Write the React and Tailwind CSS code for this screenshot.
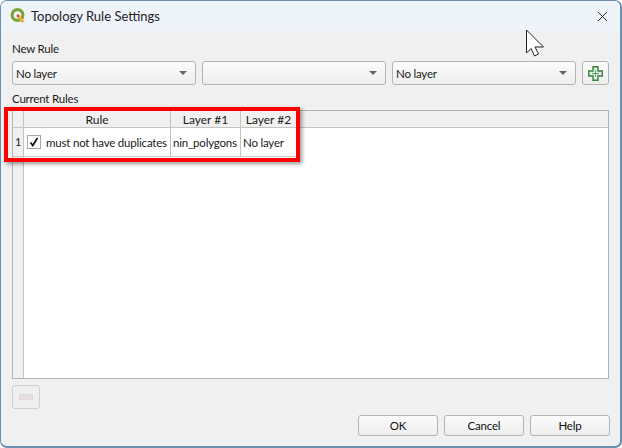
import React from "react";
import { X } from "lucide-react";

const Combo = ({ label }) => (
  <div className="w-[184px] h-[24px] flex items-center justify-between pl-[3px] pr-[8px] rounded-[3px] border border-[#b4b4b4] bg-gradient-to-b from-[#fcfcfc] to-[#eeeeee] text-[#1a1a1a]">
    <span className="pt-px">{label}</span>
    <span className="w-0 h-0 border-x-[4px] border-x-transparent border-t-[4px] border-t-[#666666]" />
  </div>
);

const QgisLogo = () => (
  <svg width="18" height="18" viewBox="0 0 18 18" fill="none">
    <circle cx="8.500" cy="8" r="5.400" stroke="#7aa53a" strokeWidth="3.200" />
    <path d="M9 9l5.500 6" stroke="#e8b23a" strokeWidth="2.800" />
    <circle cx="9" cy="8.800" r="1.500" fill="#d9533a" />
  </svg>
);

const PlusIcon = () => (
  <svg width="15" height="15" viewBox="0 0 15 15">
    <path
      d="M5 .7h5v4.300h4.300v5H10v4.300H5V10H.7V5H5z"
      fill="#dcecdc"
      stroke="#3f7f42"
      strokeWidth="1.400"
    />
    <path d="M7.500 2.500v10M2.500 7.500h10" stroke="#ffffff" strokeWidth="1" />
    <path d="M7.500 4v7M4 7.500h7" stroke="#6a9f6c" strokeWidth="1" />
  </svg>
);

const Button = ({ children }) => (
  <button className="w-[80px] h-[21px] rounded-[3px] border border-[#b4b4b4] bg-gradient-to-b from-[#fbfbfb] to-[#eeeeee] text-[#111111]">
    {children}
  </button>
);

const App = () => {
  return (
    <div
      className="relative w-[622px] h-[448px] overflow-hidden bg-[#f0f0f0] text-[11.5px] tracking-[-0.2px] leading-[16px] text-[#1a1a1a] rounded-[7px] border border-[#6b8fb0] border-r-2 border-b-2"
      style={{ fontFamily: 'Lato, "Open Sans", sans-serif' }}
    >
      <div className="h-[30px] flex items-center bg-[#eff3fa] pl-[8px] pr-[9px]">
        <QgisLogo />
        <span className="ml-[4px] text-[13px] tracking-normal text-[#222222]">Topology Rule Settings</span>
        <X className="ml-auto" size={17} strokeWidth={1.200} color="#111111" />
      </div>

      <div className="px-[11px]">
        <div className="pt-[10px] h-[30px]">New Rule</div>
        <div className="flex gap-[6px]">
          <Combo label="No layer" />
          <Combo label="" />
          <Combo label="No layer" />
          <button className="w-[27px] h-[24px] flex items-center justify-center rounded-[3px] border border-[#b4b4b4] bg-gradient-to-b from-[#fbfbfb] to-[#eeeeee]">
            <PlusIcon />
          </button>
        </div>

        <div className="h-[25px] pt-[6px]">Current Rules</div>

        <div className="h-[269px] border border-[#b4b4b4] bg-white flex flex-col">
          <div className="h-[17px] flex bg-[#f0f0f0] border-b border-[#c4c4c4] text-[12px] tracking-normal">
            <div className="w-[11px] border-r border-[#c4c4c4]" />
            <div className="w-[147px] pt-px text-center border-r border-[#c4c4c4]">Rule</div>
            <div className="w-[70px] pt-px text-center border-r border-[#c4c4c4]">Layer #1</div>
            <div className="w-[55px] pt-px text-center">Layer #2</div>
          </div>
          <div className="flex flex-1">
            <div className="w-[11px] bg-[#f0f0f0] border-r border-[#c4c4c4] h-full flex flex-col">
              <div className="h-[29px] flex items-center justify-center text-[11px] border-b border-[#c4c4c4]">1</div>
            </div>
            <div className="h-[29px] w-[147px] flex items-center border-r border-b border-[#c4c4c4] pl-[3px]">
              <span className="w-[14px] h-[14px] border border-[#a8a8a8] flex items-center justify-center bg-white">
                <svg width="10" height="10" viewBox="0 0 10 10" fill="none">
                  <path d="M1.500 5.500l2.300 3L8.500 1" stroke="#111111" strokeWidth="1.700" />
                </svg>
              </span>
              <span className="ml-[5px] pt-px whitespace-nowrap">must not have duplicates</span>
            </div>
            <div className="h-[29px] w-[70px] flex items-center border-r border-b border-[#c4c4c4] pl-[2px] pt-px">nin_polygons</div>
            <div className="h-[29px] w-[55px] flex items-center border-b border-[#c4c4c4] pl-[2px] pt-px">No layer</div>
          </div>
        </div>

        <div className="pt-[6px]">
          <button className="w-[28px] h-[24px] flex items-center justify-center rounded-[3px] border border-[#d0d0d0] bg-[#efefef]">
            <span className="w-[14px] h-[6px] border border-[#e2d8d8] bg-[#e6dede]" />
          </button>
        </div>

        <div className="flex justify-end gap-[6px] pt-[6px] -mr-px">
          <Button>OK</Button>
          <Button>Cancel</Button>
          <Button>Help</Button>
        </div>
      </div>

      {/* annotation drawn over the table */}
      <div className="absolute left-[3px] top-[106px] w-[296px] h-[55px] border-[4px] border-[#ff0000] shadow-[2px_2px_4px_rgba(0,0,0,0.4)]" />

      {/* mouse cursor */}
      <svg className="absolute left-[524px] top-[28px]" width="20" height="28" viewBox="0 0 20 28">
        <path d="M1.500 1v23l4.500-4.500 3.500 7.500 4-2-3.500-7h8.500z" fill="#ffffff" stroke="#222222" strokeWidth="1" />
      </svg>
    </div>
  );
};

export default App;
